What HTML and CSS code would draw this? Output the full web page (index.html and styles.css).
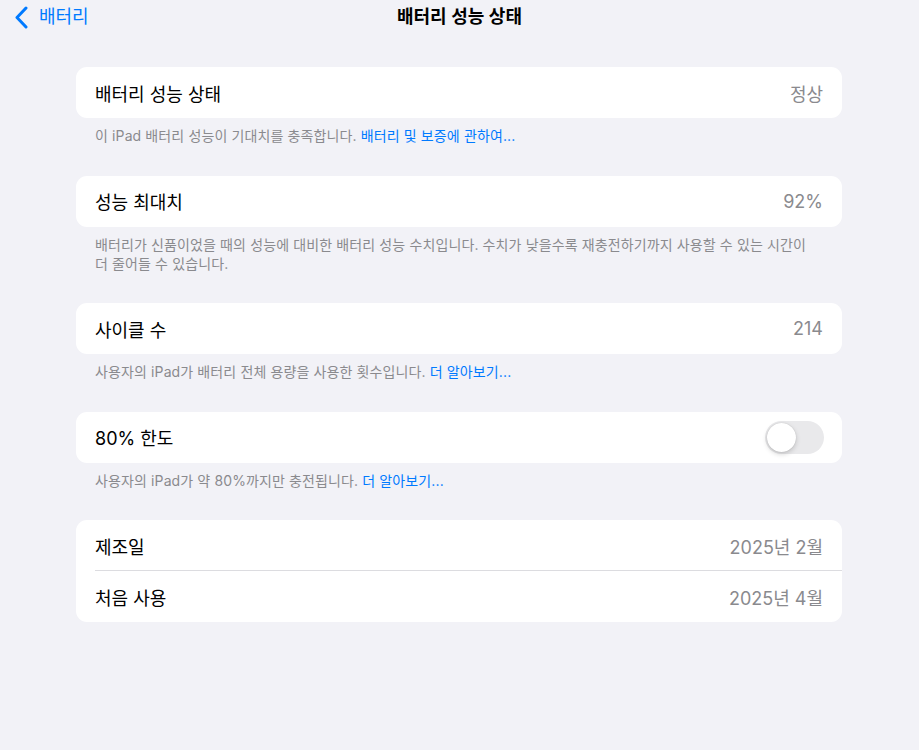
FILE: index.html
```html
<!DOCTYPE html>
<html lang="ko">
<head>
    <meta charset="UTF-8">
    <meta name="viewport" content="width=device-width, initial-scale=1.0">
    <title>배터리 성능 상태</title>
    <link rel="stylesheet" href="styles.css">
</head>
<body>
    <header class="nav">
        <a class="back" href="#">
            <svg class="chevron" width="14" height="23" viewBox="0 0 14 23">
                <path d="M12 2 L3 11.5 L12 21" fill="none" stroke="#007aff" stroke-width="3" stroke-linecap="round" stroke-linejoin="round"/>
            </svg>
            <span>배터리</span>
        </a>
        <h1 class="title">배터리 성능 상태</h1>
    </header>

    <main class="content">
        <section class="group">
            <div class="card">
                <div class="row">
                    <span class="label">배터리 성능 상태</span>
                    <span class="value">정상</span>
                </div>
            </div>
            <p class="footer">이 iPad 배터리 성능이 기대치를 충족합니다. <a href="#">배터리 및 보증에 관하여...</a></p>
        </section>

        <section class="group">
            <div class="card">
                <div class="row">
                    <span class="label">성능 최대치</span>
                    <span class="value">92%</span>
                </div>
            </div>
            <p class="footer">배터리가 신품이었을 때의 성능에 대비한 배터리 성능 수치입니다. 수치가 낮을수록 재충전하기까지 사용할 수 있는 시간이<br>더 줄어들 수 있습니다.</p>
        </section>

        <section class="group">
            <div class="card">
                <div class="row">
                    <span class="label">사이클 수</span>
                    <span class="value">214</span>
                </div>
            </div>
            <p class="footer">사용자의 iPad가 배터리 전체 용량을 사용한 횟수입니다. <a href="#">더 알아보기...</a></p>
        </section>

        <section class="group">
            <div class="card">
                <div class="row">
                    <span class="label">80% 한도</span>
                    <span class="toggle"><span class="knob"></span></span>
                </div>
            </div>
            <p class="footer">사용자의 iPad가 약 80%까지만 충전됩니다. <a href="#">더 알아보기...</a></p>
        </section>

        <section class="group">
            <div class="card">
                <div class="row">
                    <span class="label">제조일</span>
                    <span class="value">2025년 2월</span>
                </div>
                <div class="row">
                    <span class="label">처음 사용</span>
                    <span class="value">2025년 4월</span>
                </div>
            </div>
        </section>
    </main>
</body>
</html>
```

FILE: styles.css
```css
body {
    margin: 0;
    padding: 0;
    background: #f2f2f7;
    font-family: "Inter", "Noto Sans CJK KR", sans-serif;
    color: #000;
    height: 750px;
    overflow: hidden;
}
.nav {
    height: 35px;
    display: flex;
    align-items: center;
    justify-content: center;
    position: relative;
}
.back {
    position: absolute;
    left: 14px;
    top: 5px;
    display: flex;
    align-items: center;
    gap: 11px;
    color: #007aff;
    text-decoration: none;
    font-size: 18px;
    line-height: 24px;
}
.chevron {
    display: block;
}
.title {
    margin: 0;
    font-size: 18px;
    font-weight: 600;
    line-height: 24px;
    position: relative;
    top: -1px;
}
.content {
    padding: 32px 77px 0 76px;
}
.group {
    margin-bottom: 30.5px;
}
.card {
    background: #fff;
    border-radius: 11px;
    overflow: hidden;
}
.row {
    height: 51px;
    display: flex;
    align-items: center;
    justify-content: space-between;
    padding: 0 19px;
    font-size: 18px;
    position: relative;
}
.row + .row::before {
    content: "";
    position: absolute;
    left: 19px;
    right: 0;
    top: -1px;
    height: 1px;
    background: #dcdce0;
}
.value {
    color: #8a8a8e;
}
.footer {
    margin: 8px 0 0;
    padding: 0 19px;
    font-size: 14px;
    line-height: 19px;
    letter-spacing: 0.12px;
    color: #8a8a8e;
}
.footer a {
    color: #007aff;
    text-decoration: none;
}
.toggle {
    width: 59px;
    height: 33px;
    border-radius: 17px;
    background: #e9e9eb;
    position: relative;
    margin-right: -1px;
}
.knob {
    position: absolute;
    left: 2px;
    top: 2px;
    width: 29px;
    height: 29px;
    border-radius: 50%;
    background: #fff;
    box-shadow: 0 2px 5px rgba(0, 0, 0, 0.18), 0 0 1px rgba(0, 0, 0, 0.2);
}
```
